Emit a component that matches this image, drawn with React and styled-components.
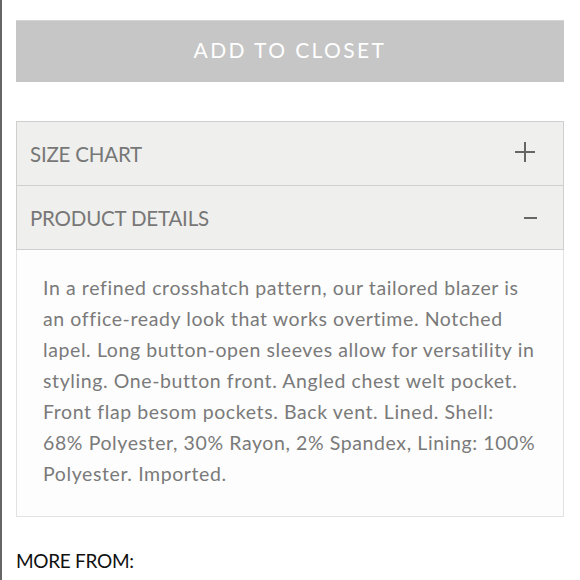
import React from "react";
import styled, { createGlobalStyle } from "styled-components";

const GlobalStyle = createGlobalStyle`
  html, body {
    margin: 0;
    padding: 0;
    background: #fff;
  }
  body {
    font-family: Lato, "Open Sans", sans-serif;
  }
`;

const Page = styled.div`
  width: 580px;
  height: 580px;
  box-sizing: border-box;
  border-left: 2px solid #666;
  padding: 20px 16px 0 14px;
  overflow: hidden;
`;

const CloseButton = styled.button`
  display: block;
  width: 100%;
  height: 62px;
  border: none;
  border-top: 1px solid #d4d4d4;
  background: #c6c6c6;
  color: #fff;
  font-family: Lato, sans-serif;
  font-size: 21px;
  letter-spacing: 2.4px;
  text-transform: uppercase;
  padding: 0 0 4px;
`;

const Accordion = styled.div`
  margin-top: 39px;
  border: 1px solid #cfcfcf;
  border-bottom: none;
`;

const Header = styled.div`
  display: flex;
  align-items: center;
  justify-content: space-between;
  height: 63px;
  padding: 0 ${(p) => p.$iconRight}px 0 13px;
  background: #efefed;
  border-bottom: 1px solid #cfcfcf;
  color: #777;
  font-size: 20.5px;
  letter-spacing: -0.2px;
`;

const Panel = styled.div`
  background: #fdfdfd;
  border: 1px solid #e2e2e2;
  border-top: none;
  margin: 0 -1px;
  padding: 22px 26px 27px 26px;
  color: #7a7a7a;
  font-size: 19.5px;
  letter-spacing: 0.6px;
  line-height: 31px;
`;

const Icon = styled.svg`
  display: block;
  stroke: #666;
  stroke-width: 2;
`;

const MoreFrom = styled.div`
  margin-top: 32px;
  color: #111;
  font-size: 19px;
  letter-spacing: -0.3px;
`;

const Plus = () => (
  <Icon width="20" height="20" viewBox="0 0 20 20" style={{ marginTop: -3 }}>
    <line x1="0" y1="10" x2="20" y2="10" />
    <line x1="10" y1="0" x2="10" y2="20" />
  </Icon>
);

const Minus = () => (
  <Icon width="13" height="20" viewBox="0 0 13 20">
    <line x1="0" y1="10" x2="13" y2="10" />
  </Icon>
);

const details =
  "In a refined crosshatch pattern, our tailored blazer is an office-ready look that works overtime. Notched lapel. Long button-open sleeves allow for versatility in styling. One-button front. Angled chest welt pocket. Front flap besom pockets. Back vent. Lined. Shell: 68% Polyester, 30% Rayon, 2% Spandex, Lining: 100% Polyester. Imported.";

export default function App() {
  return (
    <>
      <GlobalStyle />
      <Page>
        <CloseButton>Add to Closet</CloseButton>
        <Accordion>
          <Header $iconRight={28}>
            <span>SIZE CHART</span>
            <Plus />
          </Header>
          <Header $iconRight={26}>
            <span>PRODUCT DETAILS</span>
            <Minus />
          </Header>
          <Panel>{details}</Panel>
        </Accordion>
        <MoreFrom>MORE FROM:</MoreFrom>
      </Page>
    </>
  );
}
